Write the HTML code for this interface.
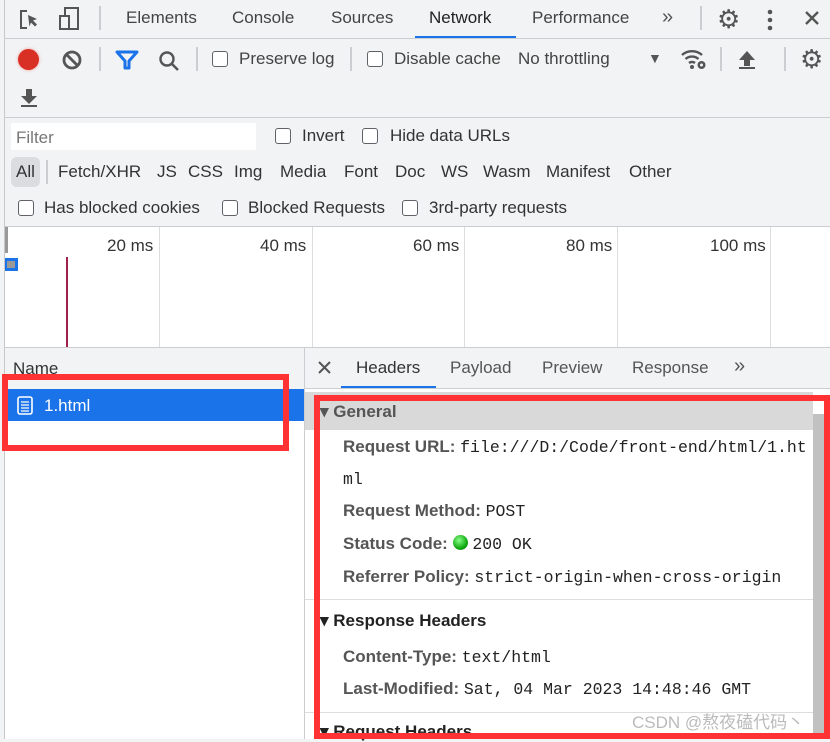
<!DOCTYPE html>
<html><head><meta charset="utf-8"><style>
*{box-sizing:border-box;margin:0;padding:0}
body{width:830px;height:739px;overflow:hidden;background:#f1f3f4;font-family:"Liberation Sans",sans-serif;color:#333;font-size:17px;position:relative}
.a{position:absolute;white-space:nowrap}
.hl{position:absolute;background:#cbcdd1}
.cb{position:absolute;width:16px;height:16px;border:1.5px solid #5f6368;border-radius:3px;background:#fff}
.mono{font-family:"Liberation Mono",monospace;font-size:16.5px;color:#222}
.lbl{font-weight:bold;color:#555;font-size:17px}
</style></head><body>
<div class="hl" style="left:4px;top:0;width:1px;height:739px;background:#c8c8c8"></div>
<!-- tab bar -->
<svg class="a" style="left:18px;top:8px" width="24" height="24" viewBox="0 0 24 24"><path d="M9 3H3v17h6" fill="none" stroke="#555" stroke-width="2"/><path d="M10 7l9 4-4 1.5 4 4-2 2-4-4-1.5 4z" fill="#555"/></svg>
<svg class="a" style="left:57px;top:6px" width="26" height="26" viewBox="0 0 26 26"><rect x="3" y="10" width="9" height="13" fill="none" stroke="#555" stroke-width="2"/><path d="M8 10V2h13v21h-9" fill="none" stroke="#555" stroke-width="2"/></svg>
<div class="hl" style="left:99px;top:6px;width:2px;height:24px"></div>
<div class="a" style="left:126px;top:8px;color:#444">Elements</div>
<div class="a" style="left:232px;top:8px;color:#444">Console</div>
<div class="a" style="left:331px;top:8px;color:#444">Sources</div>
<div class="a" style="left:429px;top:8px;color:#222">Network</div>
<div class="a" style="left:415px;top:36px;width:101px;height:3px;background:#1a73e8"></div>
<div class="a" style="left:532px;top:8px;color:#444">Performance</div>
<div class="a" style="left:662px;top:6px;color:#555;font-size:20px">»</div>
<div class="hl" style="left:700px;top:6px;width:2px;height:24px"></div>
<div class="a" style="left:717px;top:4px;color:#555;font-size:26px">⚙</div>
<svg class="a" style="left:764px;top:8px" width="12" height="24"><circle cx="6" cy="4" r="2.3" fill="#555"/><circle cx="6" cy="12" r="2.3" fill="#555"/><circle cx="6" cy="20" r="2.3" fill="#555"/></svg>
<svg class="a" style="left:804px;top:10px" width="16" height="16"><path d="M2 2L14 14M14 2L2 14" stroke="#555" stroke-width="2.4"/></svg>
<div class="hl" style="left:4px;top:38px;width:826px;height:1px"></div>
<!-- toolbar -->
<div class="a" style="left:18px;top:49px;width:21px;height:21px;border-radius:50%;background:#d93025;box-shadow:0 0 3px #f3a0a0"></div>
<svg class="a" style="left:61px;top:49px" width="22" height="22"><circle cx="11" cy="11" r="8" fill="none" stroke="#555" stroke-width="2.8"/><path d="M5.5 5.5l11 11" stroke="#555" stroke-width="2.8"/></svg>
<div class="hl" style="left:99px;top:47px;width:2px;height:24px"></div>
<svg class="a" style="left:115px;top:50px" width="24" height="20"><path d="M2 2h20l-8 9v7h-4v-7z" fill="none" stroke="#1a73e8" stroke-width="3" stroke-linejoin="round"/></svg>
<svg class="a" style="left:157px;top:49px" width="24" height="24"><circle cx="10" cy="10" r="6.5" fill="none" stroke="#555" stroke-width="2.4"/><path d="M15 15l6 6" stroke="#555" stroke-width="2.6"/></svg>
<div class="hl" style="left:196px;top:47px;width:2px;height:24px"></div>
<div class="cb" style="left:212px;top:51px"></div>
<div class="a" style="left:239px;top:49px;color:#444">Preserve log</div>
<div class="hl" style="left:350px;top:47px;width:2px;height:24px"></div>
<div class="cb" style="left:367px;top:51px"></div>
<div class="a" style="left:394px;top:49px;color:#444">Disable cache</div>
<div class="a" style="left:518px;top:49px;color:#444">No throttling</div>
<div class="a" style="left:648px;top:50px;color:#555;font-size:14px">▼</div>
<svg class="a" style="left:680px;top:47px" width="28" height="24"><path d="M2 8a15 15 0 0 1 20 0M5.5 12a10 10 0 0 1 13 0M9 16a5 5 0 0 1 6 0" fill="none" stroke="#555" stroke-width="2.4"/><circle cx="12" cy="20" r="2" fill="#555"/><circle cx="21.5" cy="18" r="4" fill="#555"/><circle cx="21.5" cy="18" r="1.5" fill="#f1f3f4"/></svg>
<div class="hl" style="left:720px;top:47px;width:2px;height:24px"></div>
<svg class="a" style="left:737px;top:49px" width="20" height="22"><path d="M10 2l8 9h-5v6h-6v-6h-5z" fill="#555"/><rect x="2" y="18" width="16" height="2" fill="#555"/></svg>
<div class="hl" style="left:784px;top:47px;width:2px;height:24px"></div>
<div class="a" style="left:800px;top:44px;color:#555;font-size:26px">⚙</div>
<svg class="a" style="left:19px;top:87px" width="20" height="22"><path d="M7 2h6v7h5l-8 8-8-8h5z" fill="#555"/><rect x="2" y="18" width="16" height="2" fill="#555"/></svg>
<div class="hl" style="left:4px;top:117px;width:826px;height:1px"></div>
<!-- filter -->
<div class="a" style="left:11px;top:123px;width:245px;height:27px;background:#fff"></div>
<div class="a" style="left:16px;top:128px;color:#777">Filter</div>
<div class="cb" style="left:275px;top:128px"></div>
<div class="a" style="left:302px;top:126px;color:#333">Invert</div>
<div class="cb" style="left:362px;top:128px"></div>
<div class="a" style="left:390px;top:126px;color:#333">Hide data URLs</div>
<div class="a" style="left:11px;top:157px;width:29px;height:30px;background:#dadce0;border-radius:6px"></div>
<div class="a" style="left:16px;top:162px;color:#333">All</div>
<div class="hl" style="left:46px;top:160px;width:2px;height:24px"></div>
<div class="a" style="left:58px;top:162px">Fetch/XHR</div>
<div class="a" style="left:157px;top:162px">JS</div>
<div class="a" style="left:188px;top:162px">CSS</div>
<div class="a" style="left:234px;top:162px">Img</div>
<div class="a" style="left:280px;top:162px">Media</div>
<div class="a" style="left:344px;top:162px">Font</div>
<div class="a" style="left:395px;top:162px">Doc</div>
<div class="a" style="left:441px;top:162px">WS</div>
<div class="a" style="left:483px;top:162px">Wasm</div>
<div class="a" style="left:546px;top:162px">Manifest</div>
<div class="a" style="left:629px;top:162px">Other</div>
<div class="cb" style="left:18px;top:200px"></div>
<div class="a" style="left:44px;top:198px;color:#333">Has blocked cookies</div>
<div class="cb" style="left:222px;top:200px"></div>
<div class="a" style="left:248px;top:198px;color:#333">Blocked Requests</div>
<div class="cb" style="left:402px;top:200px"></div>
<div class="a" style="left:429px;top:198px;color:#333">3rd-party requests</div>
<div class="hl" style="left:4px;top:226px;width:826px;height:1px"></div>
<!-- timeline -->
<div class="a" style="left:5px;top:227px;width:825px;height:120px;background:#fff"></div>
<div class="a" style="left:5px;top:227px;width:3px;height:26px;background:#999"></div>
<div class="a" style="left:5px;top:258px;width:13px;height:13px;background:#1a73e8"></div>
<div class="a" style="left:7px;top:261px;width:8px;height:7px;background:#999"></div>
<div class="a" style="left:66px;top:257px;width:2px;height:90px;background:#a0204a"></div>
<div class="hl" style="left:159px;top:227px;width:1px;height:120px;background:#dcdcdc"></div>
<div class="hl" style="left:312px;top:227px;width:1px;height:120px;background:#dcdcdc"></div>
<div class="hl" style="left:464px;top:227px;width:1px;height:120px;background:#dcdcdc"></div>
<div class="hl" style="left:617px;top:227px;width:1px;height:120px;background:#dcdcdc"></div>
<div class="hl" style="left:770px;top:227px;width:1px;height:120px;background:#dcdcdc"></div>
<div class="a" style="left:107px;top:236px;color:#333">20 ms</div>
<div class="a" style="left:260px;top:236px;color:#333">40 ms</div>
<div class="a" style="left:413px;top:236px;color:#333">60 ms</div>
<div class="a" style="left:566px;top:236px;color:#333">80 ms</div>
<div class="a" style="left:710px;top:236px;color:#333">100 ms</div>
<div class="hl" style="left:4px;top:347px;width:826px;height:1px"></div>
<!-- left panel -->
<div class="a" style="left:5px;top:348px;width:299px;height:40px;background:#f1f3f4"></div>
<div class="a" style="left:13px;top:359px;color:#333">Name</div>
<div class="a" style="left:5px;top:389px;width:299px;height:350px;background:#fff"></div>
<div class="a" style="left:5px;top:389px;width:299px;height:32px;background:#1a73e8"></div>
<svg class="a" style="left:17px;top:396px" width="16" height="19"><rect x="1" y="1" width="14" height="17" rx="2" fill="none" stroke="#fff" stroke-width="1.6"/><path d="M4 6h8M4 9h8M4 12h8M4 15h8" stroke="#fff" stroke-width="1.3"/></svg>
<div class="a" style="left:44px;top:396px;color:#fff">1.html</div>
<div class="hl" style="left:304px;top:348px;width:1px;height:391px"></div>
<!-- right panel -->
<div class="a" style="left:305px;top:348px;width:525px;height:40px;background:#f1f3f4"></div>
<svg class="a" style="left:318px;top:361px" width="13" height="13"><path d="M1 1l11 11M12 1L1 12" stroke="#555" stroke-width="2"/></svg>
<div class="a" style="left:356px;top:358px;color:#333">Headers</div>
<div class="a" style="left:341px;top:386px;width:95px;height:2px;background:#1a73e8"></div>
<div class="a" style="left:450px;top:358px;color:#555">Payload</div>
<div class="a" style="left:542px;top:358px;color:#555">Preview</div>
<div class="a" style="left:632px;top:358px;color:#555">Response</div>
<div class="a" style="left:734px;top:355px;color:#555;font-size:20px">»</div>
<div class="hl" style="left:305px;top:388px;width:525px;height:1px"></div>
<div class="a" style="left:305px;top:389px;width:525px;height:350px;background:#fff"></div>
<div class="a" style="left:305px;top:392px;width:508px;height:38px;background:#d9d9d9"></div>
<div class="a" style="left:813px;top:414px;width:15px;height:325px;background:#c1c1c1"></div>
<div class="a lbl" style="left:320px;top:402px;color:#555">▾ General</div>
<div class="a" style="left:343px;top:437px"><span class="lbl">Request URL:</span> <span class="mono">file:///D:/Code/front-end/html/1.ht</span></div>
<div class="a mono" style="left:343px;top:470px">ml</div>
<div class="a" style="left:343px;top:501px"><span class="lbl">Request Method:</span> <span class="mono">POST</span></div>
<div class="a" style="left:343px;top:534px"><span class="lbl">Status Code:</span> <span style="display:inline-block;width:15px;height:15px;border-radius:50%;background:radial-gradient(circle at 40% 35%,#8f8,#1a1 60%,#070);vertical-align:-1px"></span> <span class="mono">200 OK</span></div>
<div class="a" style="left:343px;top:567px"><span class="lbl">Referrer Policy:</span> <span class="mono">strict-origin-when-cross-origin</span></div>
<div class="hl" style="left:305px;top:599px;width:508px;height:1px;background:#ddd"></div>
<div class="a lbl" style="left:320px;top:611px;color:#222">▾ Response Headers</div>
<div class="a" style="left:343px;top:647px"><span class="lbl">Content-Type:</span> <span class="mono">text/html</span></div>
<div class="a" style="left:343px;top:679px"><span class="lbl">Last-Modified:</span> <span class="mono">Sat, 04 Mar 2023 14:48:46 GMT</span></div>
<div class="hl" style="left:305px;top:712px;width:508px;height:1px;background:#ddd"></div>
<div class="a lbl" style="left:320px;top:722px;color:#222">▾ Request Headers</div>
<div class="a" style="left:632px;top:708px;color:#bbb;font-family:'Liberation Sans','Noto Sans CJK SC',sans-serif;font-size:17px">CSDN @熬夜磕代码丶</div>
<!-- red boxes -->
<div class="a" style="left:2px;top:374px;width:287px;height:77px;border:6px solid #f33"></div>
<div class="a" style="left:314px;top:395px;width:516px;height:344px;border:6px solid #f33"></div>
</body></html>
